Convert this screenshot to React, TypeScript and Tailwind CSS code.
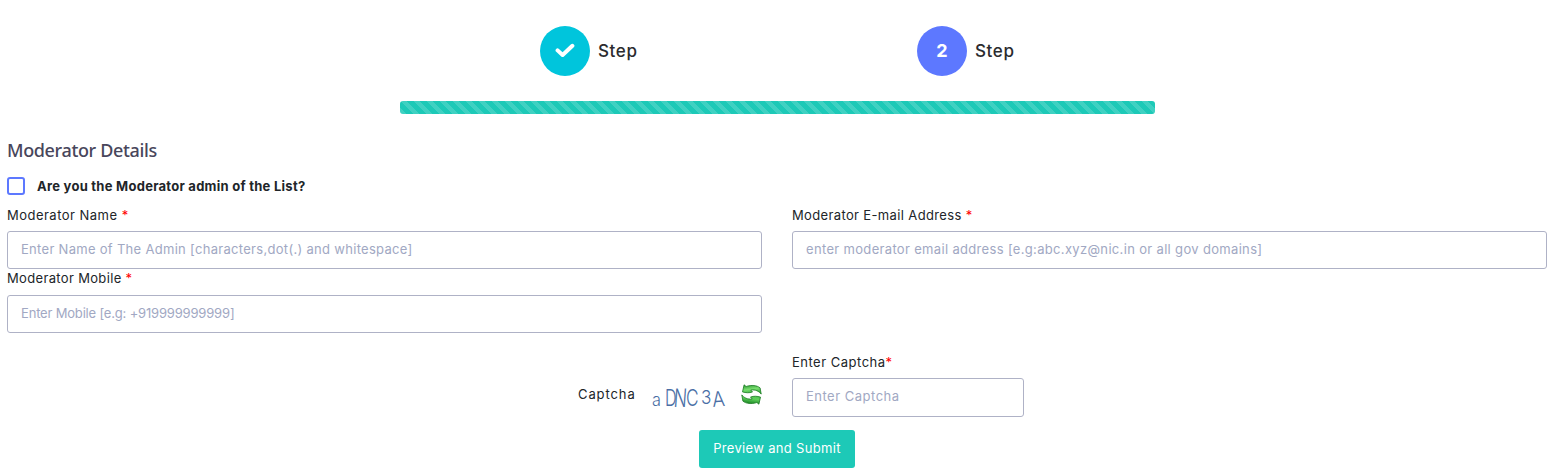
import type { ReactNode } from "react";

const stripes =
  "bg-[linear-gradient(45deg,rgba(255,255,255,0.15)_25%,transparent_25%,transparent_50%,rgba(255,255,255,0.15)_50%,rgba(255,255,255,0.15)_75%,transparent_75%,transparent)] bg-[length:13px_13px]";

function Step({ color, children }: { color: string; children: ReactNode }) {
  return (
    <div className="flex w-[377px] items-center justify-center gap-2">
      <div className={`flex size-[50px] items-center justify-center rounded-full text-lg font-bold text-white ${color}`}>
        {children}
      </div>
      <span className="w-[39px] whitespace-nowrap pt-0.5 text-[17px] font-medium tracking-[0.6px] text-[#2b2b2e]">Step</span>
    </div>
  );
}

function Label({ text, className, gap = true }: { text: string; className: string; gap?: boolean }) {
  return (
    <label className={`block h-5 whitespace-nowrap text-[13px] leading-5 text-[#212529] ${className}`}>
      {text}
      {gap && " "}
      <span className="text-[#ff0000]">*</span>
    </label>
  );
}

function Input({ placeholder, className }: { placeholder: string; className: string }) {
  return (
    <input
      placeholder={placeholder}
      className={`block rounded-[3px] border border-[#afb2c6] bg-white px-[13px] text-[13px] outline-none placeholder:text-[#a1a8c3] ${className}`}
    />
  );
}

const arrow = "M2.600 .3 L4.600 2 C10 .2 15.500 .8 18.600 3.400 L19.700 9.600 C17.500 6.800 14 4.800 9.300 5.600 L11 7.500 C7.500 8.600 4.500 8.400 1 7.400 Z";

function RefreshIcon() {
  return (
    <svg width="21" height="21" viewBox="-0.5 -0.5 21 21">
      <defs>
        <linearGradient id="leaf" x1="0" y1="0" x2="0.3" y2="1">
          <stop offset="0" stopColor="#24952b" />
          <stop offset="0.55" stopColor="#7ade70" />
          <stop offset="1" stopColor="#36ae3c" />
        </linearGradient>
        <linearGradient id="leaf-low" x1="0" y1="1" x2="0.3" y2="0">
          <stop offset="0" stopColor="#47bb4a" />
          <stop offset="0.5" stopColor="#5fcf5b" />
          <stop offset="1" stopColor="#1d8a26" />
        </linearGradient>
      </defs>
      <g stroke="#18791f" strokeWidth="0.8" strokeLinejoin="round">
        <path d={arrow} fill="url(#leaf)" />
        <path d={arrow} fill="url(#leaf-low)" transform="rotate(180 10 10)" />
      </g>
    </svg>
  );
}

export default function App() {
  return (
    <main className="h-[474px] w-[1554px] overflow-hidden bg-white px-[7px] pt-[26px] font-['Inter',sans-serif]">
      <div className="ml-[393px] flex w-[755px]">
        <Step color="bg-[#00c5dc]">
          <svg width="20" height="16" viewBox="0 0 20 16" fill="none" stroke="white" strokeWidth="4" strokeLinecap="round" strokeLinejoin="round">
            <path d="M2.600 7.400 L7.600 12 L17.400 2.800" />
          </svg>
        </Step>
        <Step color="bg-[#5d78ff]">2</Step>
      </div>
      <div className={`mt-[25px] ml-[393px] h-[13px] w-[755px] rounded-[3px] bg-[#1dc9b7] ${stripes}`} />

      <h2 className="mt-[24px] h-6 font-['Noto_Sans',sans-serif] text-lg leading-6 font-medium tracking-[-0.36px] text-[#48465b]">
        Moderator Details
      </h2>
      <div className="mt-[14px] flex h-5 items-center gap-3">
        <span className="size-[18px] rounded-[3px] border-2 border-[#5d78ff]" />
        <span className="pt-0.5 text-[13px] font-bold tracking-[0.26px] text-[#212529]">Are you the Moderator admin of the List?</span>
      </div>

      <div className="mt-[9px] grid grid-cols-[755px_755px] gap-x-[30px]">
        <div>
          <Label text="Moderator Name" className="tracking-[0.48px]" />
          <Input placeholder="Enter Name of The Admin [characters,dot(.) and whitespace]" className="mt-[6px] h-[38px] w-full pb-0.5 tracking-[0.3px]" />
        </div>
        <div>
          <Label text="Moderator E-mail Address" className="tracking-[0.36px]" />
          <Input placeholder="enter moderator email address [e.g:abc.xyz@nic.in or all gov domains]" className="mt-[6px] h-[38px] w-full pb-0.5 tracking-[0.33px]" />
        </div>
        <div className="-mt-px">
          <Label text="Moderator Mobile" className="tracking-[0.34px]" />
          <Input placeholder="Enter Mobile [e.g: +919999999999]" className="mt-[7px] h-[38px] w-full pb-0.5 tracking-[-0.18px]" />
        </div>
      </div>

      <div className="mt-[19px] grid h-[65px] grid-cols-[755px_755px] gap-x-[30px]">
        <div className="flex items-start justify-end pt-[32px]">
          <span className="mr-[17px] h-5 w-[57px] whitespace-nowrap text-[13px] leading-5 tracking-[0.9px] text-[#212529]">Captcha</span>
          <div className="mr-[15px] flex h-7 w-[74px] items-center text-[23px] leading-7 text-[#4a6ea5]">
            <span className="w-[13px] origin-left scale-x-90 pt-1 text-[18px] font-light">a</span>
            <span className="w-[9px] origin-left scale-x-70 font-light">D</span>
            <span className="w-[12px] origin-left scale-x-75 -skew-x-6 scale-y-110 font-light">N</span>
            <span className="w-[15px] origin-left scale-x-75 font-light">C</span>
            <span className="w-[11px] origin-left scale-x-90 text-[19px] font-light">3</span>
            <span className="w-[13px] origin-left scale-x-90 rotate-[-5deg] pt-1 text-[21px] font-light">A</span>
          </div>
          <RefreshIcon />
        </div>
        <div>
          <Label text="Enter Captcha" className="tracking-[0.5px]" gap={false} />
          <Input placeholder="Enter Captcha" className="mt-[6px] h-[39px] w-[232px] pb-[3px] tracking-[0.5px]" />
        </div>
      </div>
      <div className="mt-[13px] flex justify-center">
        <button className="h-[38px] w-[156px] whitespace-nowrap rounded-[3px] bg-[#1dc9b7] text-[13px] tracking-[0.33px] text-white">
          Preview and Submit
        </button>
      </div>
    </main>
  );
}
